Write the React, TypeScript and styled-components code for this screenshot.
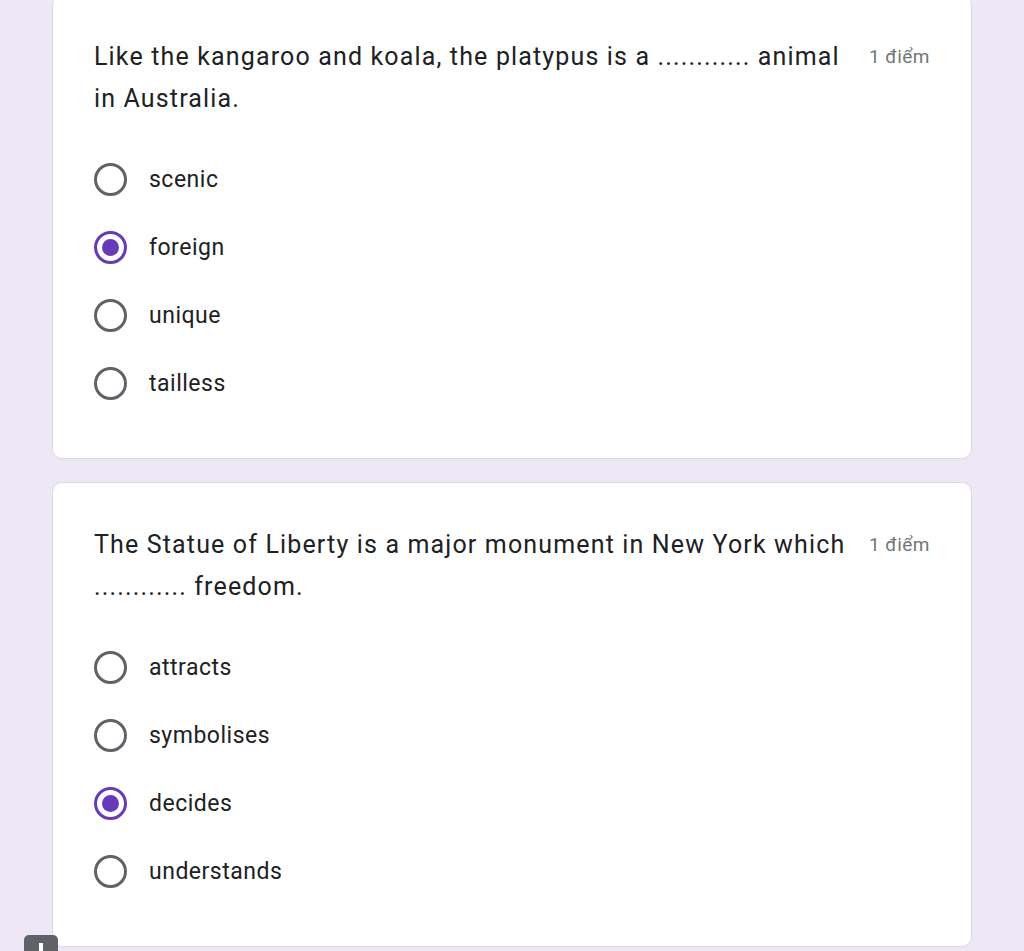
import React from "react";
import styled, { createGlobalStyle } from "styled-components";

const Global = createGlobalStyle`
  html, body { margin: 0; padding: 0; background: #ede7f6; }
  body { font-family: Roboto, "Noto Sans", Arial, sans-serif; overflow: hidden; }
`;

const Page = styled.div`
  position: relative;
  width: 1024px;
  height: 951px;
  overflow: hidden;
  background: #ede7f6;
`;

const Stack = styled.div`
  display: flex;
  flex-direction: column;
  gap: 23px;
  margin: -6px 0 0 52px;
  width: 920px;
`;

const Card = styled.div`
  box-sizing: border-box;
  height: 465px;
  background: #fff;
  border: 1px solid #dadce0;
  border-radius: 10px;
  padding: 41px 41px 0 41px;
  display: flex;
  flex-direction: column;
  gap: 25px;
`;

const Header = styled.div`
  display: flex;
  align-items: flex-start;
  gap: 14px;
`;

const Question = styled.div`
  flex: 1;
  font-size: 25px;
  line-height: 42px;
  color: #202124;
  letter-spacing: 1.15px;
`;

const Points = styled.div`
  font-size: 19px;
  line-height: 42px;
  color: #70757a;
  letter-spacing: 0.5px;
  white-space: nowrap;
`;

const Options = styled.div`
  display: flex;
  flex-direction: column;
`;

const Option = styled.div`
  height: 68px;
  display: flex;
  align-items: center;
  gap: 22px;
  font-size: 23px;
  letter-spacing: 0.5px;
  color: #202124;
`;

const Radio = styled.span<{ $checked?: boolean }>`
  box-sizing: border-box;
  width: 33px;
  height: 33px;
  border-radius: 50%;
  border: 3px solid ${(p) => (p.$checked ? "#673ab7" : "#5f6368")};
  display: flex;
  align-items: center;
  justify-content: center;
  flex: none;
  &::after {
    content: "";
    display: ${(p) => (p.$checked ? "block" : "none")};
    width: 17px;
    height: 17px;
    border-radius: 50%;
    background: #673ab7;
  }
`;

const Badge = styled.div`
  position: absolute;
  left: 24px;
  top: 935px;
  width: 34px;
  height: 24px;
  border-radius: 5px;
  background: #5f6368;
  display: flex;
  justify-content: center;
  padding-top: 8px;
  box-sizing: border-box;
  &::after {
    content: "";
    width: 4px;
    height: 8px;
    background: #fff;
  }
`;

type Q = { text: string; options: string[]; selected: number };

const questions: Q[] = [
  {
    text: "Like the kangaroo and koala, the platypus is a ............ animal in Australia.",
    options: ["scenic", "foreign", "unique", "tailless"],
    selected: 1,
  },
  {
    text: "The Statue of Liberty is a major monument in New York which ............ freedom.",
    options: ["attracts", "symbolises", "decides", "understands"],
    selected: 2,
  },
];

export default function App() {
  return (
    <Page>
      <Global />
      <Stack>
        {questions.map((q, i) => (
          <Card key={i}>
            <Header>
              <Question>{q.text}</Question>
              <Points>1 điểm</Points>
            </Header>
            <Options>
              {q.options.map((o, j) => (
                <Option key={o}>
                  <Radio $checked={j === q.selected} />
                  {o}
                </Option>
              ))}
            </Options>
          </Card>
        ))}
      </Stack>
      <Badge />
    </Page>
  );
}
